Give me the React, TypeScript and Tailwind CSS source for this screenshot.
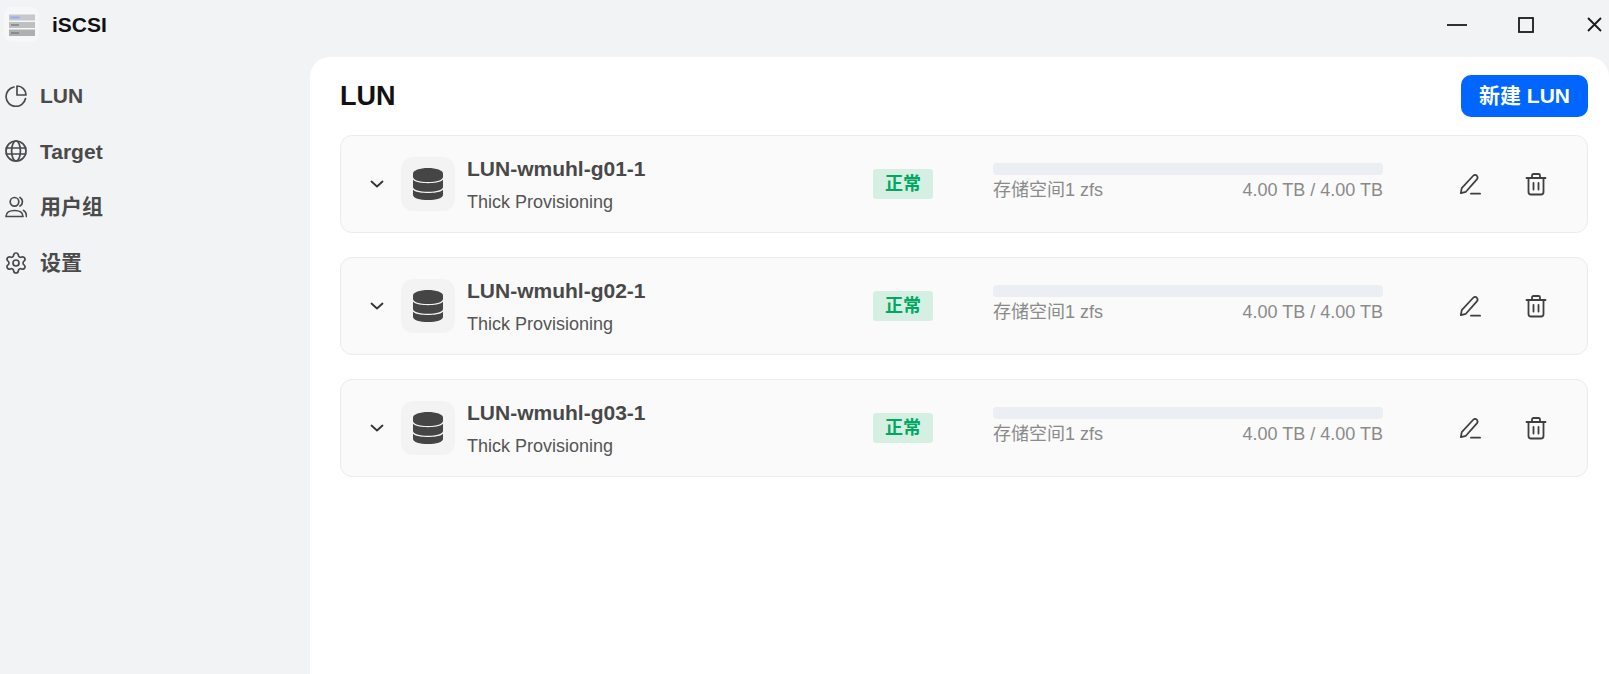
import React from "react";
import { Settings } from "lucide-react";

const FONT = "font-['Liberation_Sans','Noto_Sans_CJK_SC',sans-serif]";

function Logo() {
  return (
    <div className="w-[35px] h-[35px] rounded-[8px] bg-[#f7f7f8] flex items-center justify-center">
      <svg width="26" height="22" viewBox="0 0 26 22" className="blur-[0.5px]">
        <rect x="0" y="0.5" width="26" height="6" fill="#c6c8cb" />
        <rect x="0" y="8" width="26" height="6" fill="#bebfc1" />
        <rect x="0" y="15.500" width="26" height="6.500" fill="#aeafb1" />
        <rect x="1.500" y="2.500" width="9" height="2" fill="#9aa8fa" />
        <rect x="2" y="10" width="8" height="2" fill="#8f9092" />
        <rect x="2" y="18" width="8" height="2" fill="#8a8b8d" />
      </svg>
    </div>
  );
}

const stroke = { fill: "none", stroke: "#4a4a4a", strokeWidth: 1.7, strokeLinecap: "round" as const, strokeLinejoin: "round" as const };

function PieIcon() {
  return (
    <svg width="22" height="22" viewBox="0 0 22 22" {...stroke}>
      <path d="M9 2A9.800 9.800 0 1 0 20.500 13.500" />
      <path d="M12 1a9 9 0 0 1 9 9h-9z" />
    </svg>
  );
}
function GlobeIcon() {
  return (
    <svg width="22" height="22" viewBox="0 0 22 22" {...stroke}>
      <circle cx="11" cy="11" r="10" />
      <ellipse cx="11" cy="11" rx="4.400" ry="10" />
      <path d="M1.300 8h19.400M1.300 14h19.400" />
    </svg>
  );
}
function UsersIcon() {
  return (
    <svg width="22" height="22" viewBox="0 0 22 22" {...stroke}>
      <circle cx="9.500" cy="5.800" r="4.300" />
      <path d="M1 20.500c0-3.800 3.500-6 8.500-6s8.500 2.200 8.500 6z" />
      <path d="M15 1.500a5 5 0 0 1 0 8.600" />
      <path d="M18.500 14.500c2 1 3 3 3 6" />
    </svg>
  );
}
function GearIcon() {
  return <Settings size={24} color="#4a4a4a" strokeWidth={1.700} className="-m-[1px]" />;
}

const NAV = [
  { label: "LUN", Icon: PieIcon },
  { label: "Target", Icon: GlobeIcon },
  { label: "用户组", Icon: UsersIcon },
  { label: "设置", Icon: GearIcon },
];

const LUNS = ["LUN-wmuhl-g01-1", "LUN-wmuhl-g02-1", "LUN-wmuhl-g03-1"];

function DbIcon() {
  return (
    <svg width="30" height="32" viewBox="0 0 30 32" fill="#454545">
      <path d="M0 5.500C0 2.400 6.700 0 15 0s15 2.400 15 5.500v3.500C30 12 23.300 14 15 14S0 12 0 9z" />
      <path d="M0 11.800C3 14.500 9 15.200 15 15.200s12-.7 15-3.400V19c0 3-6.700 4.800-15 4.800S0 22 0 19z" />
      <path d="M0 21.800C3 24.500 9 25 15 25s12-.5 15-3.200V27c0 3-6.700 5-15 5S0 30 0 27z" />
    </svg>
  );
}

function Card({ name }: { name: string }) {
  return (
    <div className="h-[98px] rounded-[12px] border border-[#ebebeb] bg-[#fafafa] flex items-center">
      <svg className="ml-[28px] w-[16px] h-[16px]" viewBox="0 0 16 16" fill="none" stroke="#333" strokeWidth="1.800" strokeLinecap="round" strokeLinejoin="round">
        <path d="M2.500 5.500 8 10.500l5.500-5" />
      </svg>
      <div className="ml-[16px] w-[54px] h-[54px] rounded-[12px] bg-[#f3f3f3] flex items-center justify-center">
        <DbIcon />
      </div>
      <div className="ml-[12px] w-[406px] flex flex-col pt-[2px]">
        <div className="text-[21px] leading-[24px] font-bold text-[#484848]">{name}</div>
        <div className="mt-[10px] text-[18px] leading-[22px] text-[#555]">Thick Provisioning</div>
      </div>
      <div className="w-[60px] h-[30px] rounded-[3px] bg-[#d5f0e3] flex items-center justify-center text-[18px] font-bold text-[#00a862]">
        正常
      </div>
      <div className="ml-[60px] w-[390px] flex flex-col -mt-[3px]">
        <div className="h-[12px] rounded-[4px] bg-[#ebeef2]" />
        <div className="mt-[3px] flex justify-between text-[18px] leading-[24px] text-[#8a8a8a]">
          <span>存储空间1 zfs</span>
          <span>4.00 TB / 4.00 TB</span>
        </div>
      </div>
      <svg className="ml-[76px] w-[22px] h-[22px]" viewBox="0 0 24 24" fill="none" stroke="#3f3f3f" strokeWidth="1.900" strokeLinecap="round" strokeLinejoin="round">
        <path d="M2 22l1-5.500L15.500 3c1.200-1.200 3-1.200 4 0s1 2.800 0 4L7.500 20.500z" />
        <path d="M13 22.500h10" />
      </svg>
      <svg className="ml-[43px] w-[24px] h-[24px]" viewBox="0 0 24 24" fill="none" stroke="#3f3f3f" strokeWidth="1.800" strokeLinecap="round" strokeLinejoin="round">
        <path d="M2.500 6h19M8 6V3.500C8 2.500 8.700 2 9.500 2h5c.8 0 1.500.5 1.500 1.500V6" />
        <path d="M4.500 6v14c0 1.500 1 2.500 2.500 2.500h10c1.500 0 2.500-1 2.500-2.500V6" />
        <path d="M9.500 11v6.500M14.500 11v6.500" />
      </svg>
    </div>
  );
}

export default function App() {
  return (
    <div className={`${FONT} w-[1609px] h-[674px] bg-[#f2f3f5] flex flex-col overflow-hidden`}>
      <header className="h-[57px] shrink-0 flex items-center pb-[8px]">
        <div className="ml-[4px]"><Logo /></div>
        <div className="ml-[13px] text-[21px] font-bold text-[#111]">iSCSI</div>
        <div className="ml-auto flex items-center">
          <svg width="20" height="16" viewBox="0 0 20 16" className="mr-[51px]" fill="none" stroke="#1a1a1a" strokeWidth="1.800"><path d="M0 8h20" /></svg>
          <svg width="16" height="16" viewBox="0 0 16 16" className="mr-[53px]" fill="none" stroke="#1a1a1a" strokeWidth="1.800"><rect x="1" y="1" width="14" height="14" /></svg>
          <svg width="15" height="15" viewBox="0 0 15 15" className="mr-[7px]" fill="none" stroke="#1a1a1a" strokeWidth="1.800"><path d="M1 1l13 13M14 1 1 14" /></svg>
        </div>
      </header>
      <div className="flex flex-1 min-h-0">
        <nav className="w-[310px] shrink-0 pl-[5px] pt-[11px] flex flex-col">
          {NAV.map(({ label, Icon }) => (
            <div key={label} className="h-[55.6px] flex items-center gap-[13px]">
              <Icon />
              <span className="text-[21px] font-bold text-[#4a4a4a]">{label}</span>
            </div>
          ))}
        </nav>
        <main className="flex-1 bg-white rounded-t-[20px] pl-[30px] pr-[21px]">
          <div className="h-[78px] flex items-center justify-between pb-[1px]">
            <h1 className="text-[27px] font-bold text-[#111] pt-[2px]">LUN</h1>
            <button className="w-[127px] h-[42px] rounded-[10px] bg-[#0066ff] text-white text-[21px] font-bold">新建 LUN</button>
          </div>
          <div className="flex flex-col gap-[24px]">
            {LUNS.map((n) => <Card key={n} name={n} />)}
          </div>
        </main>
      </div>
    </div>
  );
}
